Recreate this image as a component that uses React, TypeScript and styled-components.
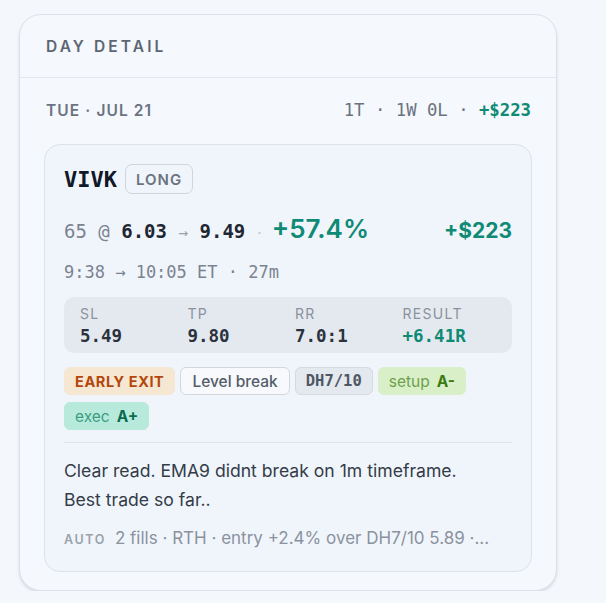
import styled, { createGlobalStyle } from "styled-components";

const GlobalStyle = createGlobalStyle`
  body {
    margin: 0;
    background: #f4f7fb;
    font-family: Inter, "Noto Sans", sans-serif;
  }
`;

const mono = `"DejaVu Sans Mono", "Liberation Mono", monospace`;

const Page = styled.div`
  padding: 14px 0 0 19px;
`;

const Panel = styled.section`
  width: 538px;
  box-sizing: border-box;
  background: #f5f8fc;
  border: 1px solid #dde2e8;
  border-radius: 22px;
  box-shadow: 0 2px 3px rgba(15, 23, 42, 0.12);
  padding-bottom: 18px;
`;

const PanelHeader = styled.div`
  height: 62px;
  display: flex;
  align-items: center;
  padding: 0 26px;
  border-bottom: 1px solid #e4e8ee;
  font-size: 15.5px;
  font-weight: 600;
  letter-spacing: 3.1px;
  color: #5d6673;
`;

const DateRow = styled.div`
  display: flex;
  justify-content: space-between;
  align-items: center;
  height: 66px;
  padding: 0 25px 2px 26px;
  box-sizing: border-box;
`;

const DateLabel = styled.span`
  font-size: 15.5px;
  font-weight: 600;
  letter-spacing: 1.1px;
  color: #6b7380;
`;

const DaySummary = styled.span`
  font-family: ${mono};
  font-size: 17.3px;
  color: #6b7380;

  b {
    font-weight: 700;
    color: #0f8a74;
  }
`;

const TradeCard = styled.article`
  margin: 0 24px;
  background: #f0f5fc;
  border: 1px solid #dde2e8;
  border-radius: 16px;
  padding: 19px 19px 20px 19px;
`;

const TitleRow = styled.div`
  display: flex;
  align-items: center;
  gap: 8px;
  height: 30px;
`;

const Ticker = styled.span`
  font-family: ${mono};
  font-size: 22px;
  font-weight: 700;
  color: #111827;
`;

const SideBadge = styled.span`
  font-size: 15px;
  font-weight: 600;
  letter-spacing: 1px;
  color: #6b7380;
  border: 1px solid #d0d5dc;
  border-radius: 7px;
  padding: 0 10px;
  height: 30px;
  box-sizing: border-box;
  display: inline-flex;
  align-items: center;
`;

const PriceRow = styled.div`
  display: flex;
  align-items: baseline;
  margin-top: 19px;
  height: 32px;
  line-height: 32px;
  font-family: ${mono};
  font-size: 19px;
  color: #7b8390;
`;

const Strong = styled.b`
  font-weight: 700;
  color: #1f2733;
`;

const Arrow = styled.span`
  color: #9aa1ab;
  font-size: 16px;
`;

const Dot = styled.span`
  color: #c0c6ce;
  margin: 0 8px 0 10px;
  font-size: 14px;
`;

const Change = styled.span`
  font-family: Inter, sans-serif;
  font-size: 26px;
  font-weight: 600;
  color: #0f8a74;
`;

const Pnl = styled.span`
  margin-left: auto;
  font-family: Inter, sans-serif;
  font-size: 21px;
  font-weight: 700;
  color: #0f8a74;
`;

const TimeRow = styled.div`
  margin-top: 16px;
  line-height: 22px;
  font-family: ${mono};
  font-size: 17px;
  color: #7b8390;
`;

const Stats = styled.div`
  margin-top: 14px;
  display: grid;
  grid-template-columns: repeat(4, 107.5px);
  padding: 8px 16px 7px;
  background: #e4e9f0;
  border-radius: 10px;
`;

const Stat = styled.div`
  display: flex;
  flex-direction: column;
  gap: 3px;
`;

const StatLabel = styled.span`
  font-size: 14px;
  line-height: 18px;
  letter-spacing: 1.3px;
  color: #8a929d;
`;

const StatValue = styled.span<{ $good?: boolean }>`
  font-family: ${mono};
  font-size: 17.5px;
  line-height: 20px;
  font-weight: 700;
  color: ${(p) => (p.$good ? "#0f8a74" : "#2a323d")};
`;

const Tags = styled.div`
  margin-top: 14px;
  display: flex;
  flex-wrap: wrap;
  gap: 7px 5px;
  padding-bottom: 12px;
  border-bottom: 1px solid #e0e5eb;
`;

type Tone = "warn" | "outline" | "code" | "setup" | "exec";

const tones: Record<Tone, { bg: string; fg: string; border: string }> = {
  warn: { bg: "#f6e7d3", fg: "#b4470b", border: "#f6e7d3" },
  outline: { bg: "#f7f9fc", fg: "#545d69", border: "#d2d7de" },
  code: { bg: "#e4e9f0", fg: "#4e5763", border: "#d5dae1" },
  setup: { bg: "#d9efc8", fg: "#6f9f4c", border: "#d9efc8" },
  exec: { bg: "#b8eadb", fg: "#3b9d82", border: "#b8eadb" },
};

const Tag = styled.span<{ $tone: Tone; $mono?: boolean; $caps?: boolean }>`
  display: inline-flex;
  align-items: center;
  gap: 7px;
  height: 28px;
  box-sizing: border-box;
  padding: 0 10px;
  border-radius: 6px;
  border: 1px solid ${(p) => tones[p.$tone].border};
  background: ${(p) => tones[p.$tone].bg};
  color: ${(p) => tones[p.$tone].fg};
  font-family: ${(p) => (p.$mono ? mono : "Inter, sans-serif")};
  font-size: ${(p) => (p.$caps ? "14.5px" : "15.5px")};
  font-weight: ${(p) => (p.$caps || p.$mono ? 700 : p.$tone === "outline" ? 500 : 400)};
  letter-spacing: ${(p) => (p.$caps ? "0.6px" : "0")};
  ${(p) => p.$tone === "outline" && "border-width: 1.5px; padding: 0 11px;"}
`;

const Grade = styled.b<{ $color: string }>`
  font-weight: 700;
  color: ${(p) => p.$color};
`;

const Note = styled.p`
  margin: 13px 0 0;
  font-size: 17.6px;
  line-height: 29px;
  color: #343c48;
`;

const Footer = styled.div`
  margin-top: 13px;
  display: flex;
  align-items: baseline;
  gap: 9px;
  line-height: 22px;
  white-space: nowrap;
`;

const AutoTag = styled.span`
  font-size: 12.5px;
  font-weight: 600;
  letter-spacing: 1.6px;
  color: #9aa2ad;
`;

const FooterText = styled.span`
  font-size: 17px;
  color: #8a929e;
`;

const stats = [
  { label: "SL", value: "5.49" },
  { label: "TP", value: "9.80" },
  { label: "RR", value: "7.0:1" },
  { label: "RESULT", value: "+6.41R", good: true },
];

export default function App() {
  return (
    <Page>
      <GlobalStyle />
      <Panel>
        <PanelHeader>DAY DETAIL</PanelHeader>
        <DateRow>
          <DateLabel>TUE · JUL 21</DateLabel>
          <DaySummary>
            1T · 1W 0L · <b>+$223</b>
          </DaySummary>
        </DateRow>

        <TradeCard>
          <TitleRow>
            <Ticker>VIVK</Ticker>
            <SideBadge>LONG</SideBadge>
          </TitleRow>

          <PriceRow>
            65 @&nbsp;<Strong>6.03</Strong>&nbsp;<Arrow>→</Arrow>&nbsp;<Strong>9.49</Strong>
            <Dot>·</Dot>
            <Change>+57.4%</Change>
            <Pnl>+$223</Pnl>
          </PriceRow>

          <TimeRow>9:38 → 10:05 ET · 27m</TimeRow>

          <Stats>
            {stats.map((s) => (
              <Stat key={s.label}>
                <StatLabel>{s.label}</StatLabel>
                <StatValue $good={s.good}>{s.value}</StatValue>
              </Stat>
            ))}
          </Stats>

          <Tags>
            <Tag $tone="warn" $caps>EARLY EXIT</Tag>
            <Tag $tone="outline">Level break</Tag>
            <Tag $tone="code" $mono>DH7/10</Tag>
            <Tag $tone="setup">
              setup <Grade $color="#3d7a12">A-</Grade>
            </Tag>
            <Tag $tone="exec">
              exec <Grade $color="#0d6a52">A+</Grade>
            </Tag>
          </Tags>

          <Note>
            Clear read. EMA9 didnt break on 1m timeframe.
            <br />
            Best trade so far..
          </Note>

          <Footer>
            <AutoTag>AUTO</AutoTag>
            <FooterText>2 fills · RTH · entry +2.4% over DH7/10 5.89 ·...</FooterText>
          </Footer>
        </TradeCard>
      </Panel>
    </Page>
  );
}
